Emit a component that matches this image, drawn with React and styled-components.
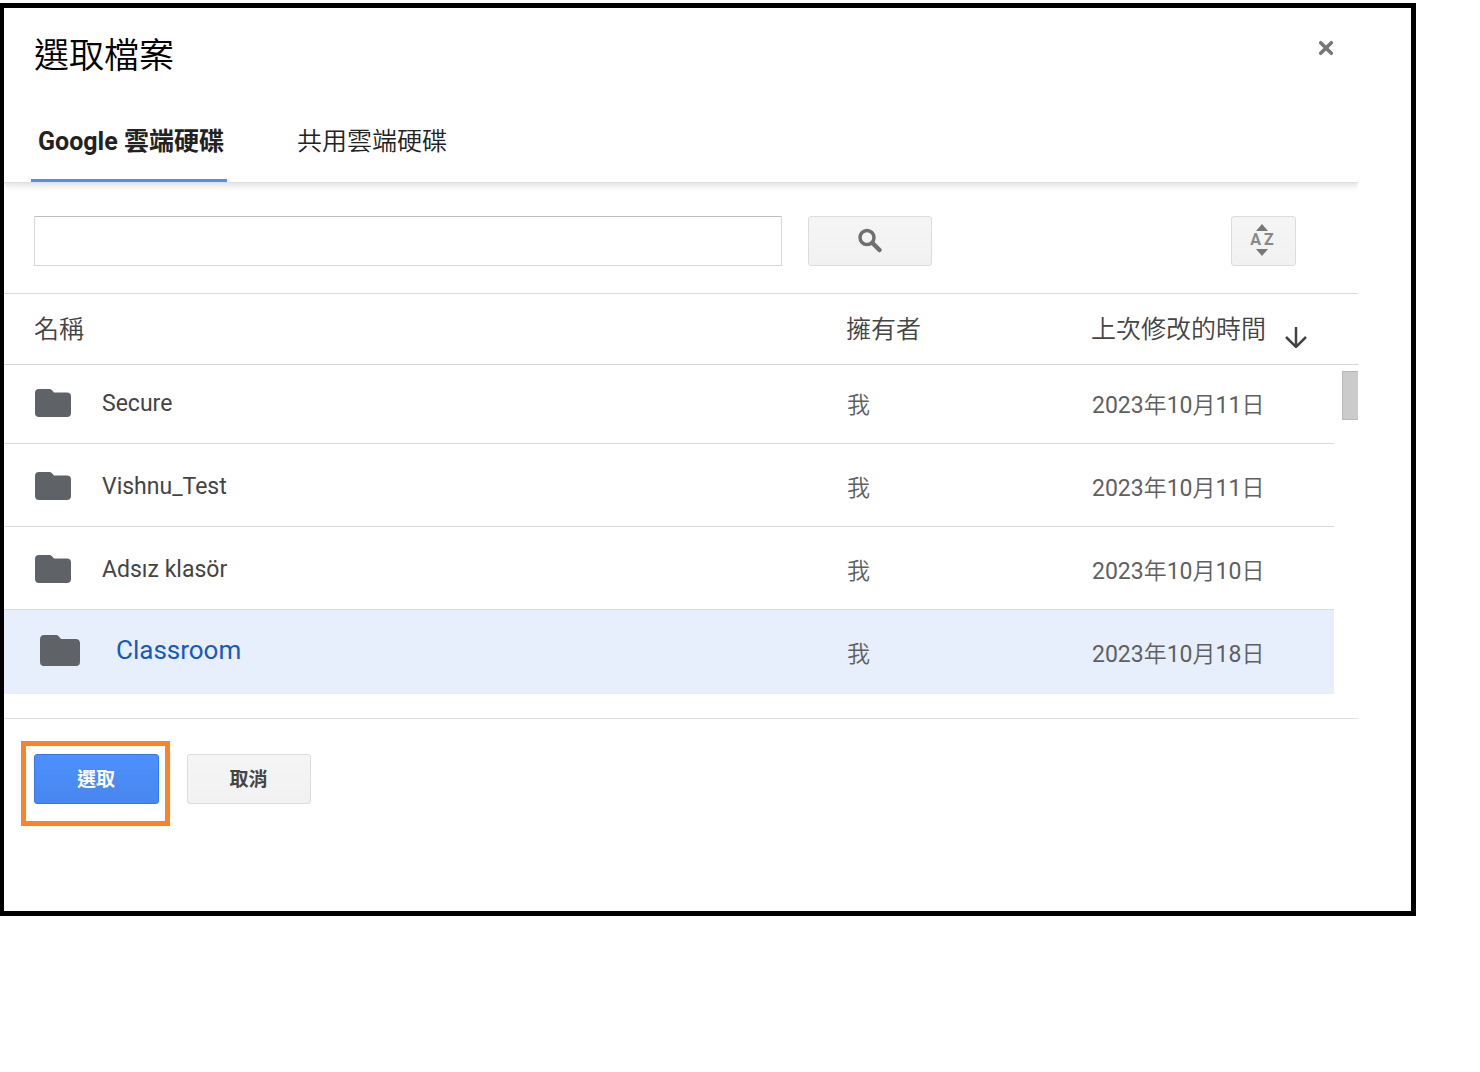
import React, { useState } from "react";
import styled, { createGlobalStyle, css } from "styled-components";

const files = [
  { id: 1, name: "Secure", owner: "我", modified: "2023年10月11日" },
  { id: 2, name: "Vishnu_Test", owner: "我", modified: "2023年10月11日" },
  { id: 3, name: "Adsız klasör", owner: "我", modified: "2023年10月10日" },
  { id: 4, name: "Classroom", owner: "我", modified: "2023年10月18日" },
];

const tabs = ["Google 雲端硬碟", "共用雲端硬碟"];

const FolderIcon = () => (
  <svg viewBox="0 0 36 28" fill="#5f6368" aria-hidden="true">
    <path d="M4 0H14.5Q15.700 0 16.500 .8L19 3.500H32Q36 3.500 36 7.500V24Q36 28 32 28H4Q0 28 0 24V4Q0 0 4 0Z" />
  </svg>
);

const SearchIcon = () => (
  <svg width="26" height="26" viewBox="0 0 26 26" fill="none" stroke="#6f6f6f" aria-hidden="true">
    <circle cx="10" cy="9.500" r="7" strokeWidth="3.500" />
    <path d="M15.500 15L22.500 22" strokeWidth="4.500" strokeLinecap="round" />
  </svg>
);

const CloseIcon = () => (
  <svg width="16" height="16" viewBox="0 0 16 16" stroke="#777" strokeWidth="3.600" strokeLinecap="round" aria-hidden="true">
    <path d="M2.700 2.700L13.300 13.300M13.300 2.700L2.700 13.300" />
  </svg>
);

const ArrowDownIcon = () => (
  <svg width="22" height="24" viewBox="0 0 22 24" fill="none" stroke="#444" strokeWidth="2.500" aria-hidden="true">
    <path d="M11 3V23M1 13L11 23L21 13" />
  </svg>
);

const App = () => {
  const [activeTab, setActiveTab] = useState(0);
  const [selectedId, setSelectedId] = useState(4);
  const [query, setQuery] = useState("");

  return (
    <>
      <GlobalStyle />
      <Page>
        <Dialog>
          <Content>
            <Header>
              <Title>選取檔案</Title>
              <CloseButton type="button" aria-label="關閉">
                <CloseIcon />
              </CloseButton>
            </Header>

            <Tabs role="tablist">
              {tabs.map((tab, index) => (
                <Tab
                  key={tab}
                  type="button"
                  role="tab"
                  aria-selected={activeTab === index}
                  $active={activeTab === index}
                  onClick={() => setActiveTab(index)}
                >
                  {tab}
                </Tab>
              ))}
            </Tabs>

            <SearchBar>
              <SearchInput
                type="text"
                aria-label="搜尋"
                value={query}
                onChange={(e) => setQuery(e.target.value)}
              />
              <SearchButton type="button" aria-label="搜尋">
                <SearchIcon />
              </SearchButton>
              <SortButton type="button">
                <Triangle $up />
                <SortLabel>
                  <span>A</span>
                  <span>Z</span>
                </SortLabel>
                <Triangle />
              </SortButton>
            </SearchBar>

            <FileTable>
              <colgroup>
                <col />
                <col className="owner" />
                <col className="modified" />
                <col className="gutter" />
              </colgroup>
              <thead>
                <tr>
                  <HeadCell $first>名稱</HeadCell>
                  <HeadCell>擁有者</HeadCell>
                  <HeadCell colSpan={2}>
                    <SortedBy>
                      上次修改的時間
                      <ArrowDownIcon />
                    </SortedBy>
                  </HeadCell>
                </tr>
              </thead>
              <tbody>
                {files.map((file, index) => (
                  <Row
                    key={file.id}
                    $selected={file.id === selectedId}
                    onClick={() => setSelectedId(file.id)}
                  >
                    <Cell $name $selected={file.id === selectedId}>
                      <FileName $selected={file.id === selectedId}>
                        <FolderIcon />
                        {file.name}
                      </FileName>
                    </Cell>
                    <Cell $selected={file.id === selectedId}>{file.owner}</Cell>
                    <Cell $selected={file.id === selectedId}>
                      {file.modified}
                    </Cell>
                    {index === 0 && (
                      <ScrollGutter rowSpan={files.length}>
                        <ScrollThumb />
                      </ScrollGutter>
                    )}
                  </Row>
                ))}
              </tbody>
            </FileTable>

            <Footer>
              <Highlight>
                <FooterButton type="button" $primary>
                  選取
                </FooterButton>
              </Highlight>
              <FooterButton type="button">取消</FooterButton>
            </Footer>
          </Content>
        </Dialog>
      </Page>
    </>
  );
};

export default App;

const GlobalStyle = createGlobalStyle`
  * {
    box-sizing: border-box;
  }
  body {
    margin: 0;
    background: #fff;
    color: #444;
    font-family: Roboto, "Noto Sans CJK TC", sans-serif;
  }
  button, input {
    font-family: inherit;
  }
  button {
    cursor: pointer;
  }
`;

const Page = styled.div`
  padding: 3px 64px 0 0;
`;

const Dialog = styled.main`
  border: 5px solid #000;
  border-left-width: 4px;
  padding: 25px 53px 85px 0;
`;

const Content = styled.div`
  display: flex;
  flex-direction: column;
`;

const Header = styled.header`
  display: flex;
  align-items: flex-start;
  justify-content: space-between;
  padding: 0 17px 0 30px;
`;

const Title = styled.h1`
  margin: 0;
  color: #000;
  font-size: 35px;
  font-weight: 350;
  line-height: 48px;
`;

const CloseButton = styled.button`
  display: flex;
  align-items: center;
  justify-content: center;
  width: 30px;
  height: 30px;
  padding: 0;
  border: none;
  background: none;
`;

const Tabs = styled.div`
  display: flex;
  gap: 63px;
  margin-top: 21px;
  padding-left: 27px;
  box-shadow: 0 1px 0 #dedede, 0 4px 6px rgba(0, 0, 0, 0.12);
  clip-path: inset(0 0 -12px 0);
`;

const Tab = styled.button`
  height: 80px;
  padding: 0 3px 4px 7px;
  border: none;
  border-bottom: 3px solid ${(props) => (props.$active ? "#5290e8" : "transparent")};
  background: none;
  color: #222;
  font-size: 25px;
  font-weight: ${(props) => (props.$active ? 700 : 350)};
`;

const SearchBar = styled.div`
  display: flex;
  gap: 26px;
  padding: 34px 62px 27px 30px;
`;

const SearchInput = styled.input`
  flex: 1;
  min-width: 0;
  max-width: 748px;
  height: 50px;
  padding: 0 12px;
  border: 1px solid #d9d9d9;
  border-top-color: #c0c0c0;
  border-radius: 1px;
  font-size: 23px;
`;

const greyButton = css`
  border: 1px solid #dcdcdc;
  border-radius: 3px;
  background: linear-gradient(#f5f5f5, #f1f1f1);
  color: #444;
`;

const SearchButton = styled.button`
  ${greyButton}
  display: flex;
  align-items: center;
  justify-content: center;
  width: 124px;
  height: 50px;
`;

const SortButton = styled.button`
  ${greyButton}
  display: flex;
  flex-direction: column;
  align-items: center;
  justify-content: center;
  width: 65px;
  height: 50px;
  margin-left: auto;
  padding: 0 3px 2px 0;
`;

const SortLabel = styled.span`
  display: flex;
  gap: 3px;
  color: #888;
  font-size: 16px;
  font-weight: 700;
  line-height: 18px;
`;

const Triangle = styled.span`
  border: 6px solid transparent;
  ${(props) =>
    props.$up
      ? "border-top: none; border-bottom: 7px solid #777;"
      : "border-bottom: none; border-top: 7px solid #777;"}
`;

const FileTable = styled.table`
  width: 100%;
  border-spacing: 0;
  border-top: 1px solid #dadada;
  table-layout: fixed;

  .owner {
    width: 245px;
  }
  .modified {
    width: 243px;
  }
  .gutter {
    width: 24px;
  }
`;

const HeadCell = styled.th`
  height: 71px;
  padding: 1px 0 0 ${(props) => (props.$first ? "30px" : "0")};
  border-bottom: 1px solid #d6d6d6;
  font-size: 25px;
  font-weight: 350;
  line-height: 36px;
  text-align: left;
`;

const SortedBy = styled.span`
  display: flex;
  align-items: flex-end;
  gap: 19px;
`;

const Row = styled.tr`
  height: 83px;
  background: ${(props) => (props.$selected ? "#e7effd" : "transparent")};
  cursor: pointer;

  &:first-child {
    height: 79px;
  }
  &:first-child td {
    padding-bottom: 4px;
  }
  &:last-child {
    height: 84px;
  }
`;

const Cell = styled.td`
  padding: ${(props) => (props.$name ? "2px 0 0" : "1px 0 0 1px")};
  border-bottom: 1px solid ${(props) => (props.$selected ? "transparent" : "#d9dbde")};
  color: #5f5f5f;
  font-family: Roboto, "Noto Sans CJK TC DemiLight", "Noto Sans CJK TC", sans-serif;
  font-size: 23px;
  font-weight: 400;
`;

const FileName = styled.div`
  display: flex;
  align-items: center;
  gap: ${(props) => (props.$selected ? "36px" : "31px")};
  padding: ${(props) => (props.$selected ? "0 0 4px 36px" : "0 0 0 31px")};
  color: ${(props) => (props.$selected ? "#185abc" : "#444")};
  font-size: ${(props) => (props.$selected ? "26px" : "23px")};

  svg {
    flex: none;
    width: ${(props) => (props.$selected ? "40px" : "36px")};
  }
`;

const ScrollGutter = styled.td`
  padding: 6px 0 0 8px;
  background: #fff;
  vertical-align: top;
`;

const ScrollThumb = styled.div`
  height: 49px;
  border: 1px solid #b8b8b8;
  border-right: none;
  background: #cbcbcb;
`;

const Footer = styled.footer`
  display: flex;
  align-items: flex-start;
  gap: 17px;
  margin-top: 24px;
  padding: 22px 0 0 17px;
  border-top: 1px solid #dfdfdf;

  > button {
    margin-top: 13px;
  }
`;

const Highlight = styled.div`
  padding: 8px 6px 17px 8px;
  border: 5px solid #ff8228;
`;

const FooterButton = styled.button`
  ${greyButton}
  display: block;
  width: 124px;
  height: 50px;
  padding: 0 1px 4px 0;
  font-size: 19px;
  font-weight: 700;
  ${(props) =>
    props.$primary &&
    css`
      width: 125px;
      border-color: #3079ed;
      background: linear-gradient(#4d90fe, #4787ed);
      color: #fff;
    `}
`;
